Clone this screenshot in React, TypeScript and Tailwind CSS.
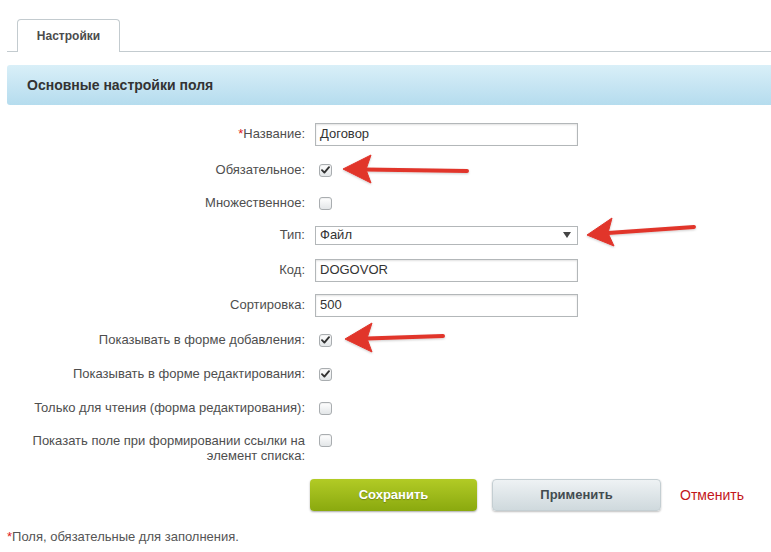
import React from "react";

const font = { fontFamily: '"Liberation Sans", Arial, sans-serif' };

function Check({ checked }: { checked?: boolean }) {
  return (
    <span className="ml-[4px] inline-flex h-[13px] w-[13px] items-center justify-center rounded-[3px] border border-[#a9adb0] bg-gradient-to-b from-[#ffffff] to-[#e3e6e8] shadow-[inset_0_1px_1px_rgba(0,0,0,0.06)]">
      {checked && (
        <svg width="9" height="8" viewBox="0 0 9 8">
          <path d="M1 4.2 L3.4 6.6 L8 1.2" fill="none" stroke="#333" strokeWidth="1.9" strokeLinecap="round" strokeLinejoin="round" />
        </svg>
      )}
    </span>
  );
}

function Input({ value }: { value: string }) {
  return (
    <div className="flex h-[23px] w-[263px] items-center border border-[#b3b7b9] bg-white pl-[4px] text-[13px] text-[#333] shadow-[inset_0_1px_2px_rgba(0,0,0,0.12)]">
      {value}
    </div>
  );
}

function Row({ label, h, children, req }: { label: string; h: string; children: React.ReactNode; req?: boolean }) {
  return (
    <div className={`flex items-center ${h}`}>
      <div className="w-[306px] pr-[1px] text-right text-[13px] text-[#4e4e4e]">
        {req && <span className="text-[#e01b1b]">*</span>}
        {label}
      </div>
      <div className="ml-[9px] flex items-center">{children}</div>
    </div>
  );
}

export default function App() {
  return (
    <div className="relative h-[552px] w-[771px] overflow-hidden bg-white" style={font}>
      {/* tabs */}
      <div className="ml-[7px] flex h-[52px] items-end border-b border-[#c3cbcf] pl-[10px]">
        <div className="relative -mb-px flex h-[33px] w-[103px] items-center justify-center rounded-t-[4px] border border-b-0 border-[#c3cbcf] bg-white text-[12px] font-bold text-[#4c4c4c]">
          Настройки
        </div>
      </div>
      {/* section bar */}
      <div className="ml-[7px] mt-[13px] flex h-[40px] items-center rounded-l-[3px] bg-gradient-to-b from-[#d9eff8] to-[#b5dcee] pl-[20px] text-[14px] font-bold text-[#333]">
        Основные настройки поля
      </div>

      {/* form */}
      <div className="mt-[12px] flex flex-col">
        <Row label="Название:" h="h-[34px]" req>
          <Input value="Договор" />
        </Row>
        <Row label="Обязательное:" h="h-[38px]">
          <Check checked />
        </Row>
        <Row label="Множественное:" h="h-[28px]">
          <Check />
        </Row>
        <Row label="Тип:" h="h-[36px]">
          <div className="flex h-[19px] w-[263px] items-center justify-between border border-[#b3b7b9] bg-white pl-[4px] pr-[6px] text-[13px] text-[#333]">
            <span>Файл</span>
            <svg width="8" height="6" viewBox="0 0 8 6">
              <path d="M0 0 H8 L4 6 Z" fill="#444" />
            </svg>
          </div>
        </Row>
        <Row label="Код:" h="h-[34px]">
          <Input value="DOGOVOR" />
        </Row>
        <Row label="Сортировка:" h="h-[36px]">
          <Input value="500" />
        </Row>
        <Row label="Показывать в форме добавления:" h="h-[34px]">
          <Check checked />
        </Row>
        <Row label="Показывать в форме редактирования:" h="h-[34px]">
          <Check checked />
        </Row>
        <Row label="Только для чтения (форма редактирования):" h="h-[34px]">
          <Check />
        </Row>
        <div className="flex items-start pt-[8px]">
          <div className="w-[306px] pr-[1px] text-right text-[13px] leading-[15px] text-[#4e4e4e]">
            Показать поле при формировании ссылки на
            <br />
            элемент списка:
          </div>
          <div className="ml-[9px] mt-[1px] flex items-center">
            <Check />
          </div>
        </div>

        {/* buttons */}
        <div className="ml-[310px] mt-[16px] flex items-center">
          <button className="h-[32px] w-[167px] rounded-[4px] bg-gradient-to-b from-[#b2cb25] to-[#8aa90e] text-[13px] font-bold text-white shadow-[0_1px_2px_rgba(0,0,0,0.35)] [text-shadow:0_1px_1px_rgba(0,0,0,0.25)]">
            Сохранить
          </button>
          <button className="ml-[15px] h-[32px] w-[169px] rounded-[4px] border border-[#c4ced2] bg-gradient-to-b from-[#eef2f4] to-[#cfd9dd] text-[13px] font-bold text-[#434c50] shadow-[0_1px_2px_rgba(0,0,0,0.25)]">
            Применить
          </button>
          <span className="ml-[19px] text-[14px] text-[#c3161b]">Отменить</span>
        </div>

        <div className="ml-[7px] mt-[16px] text-[13px] text-[#555]">
          <span className="text-[#e01b1b]">*</span>Поля, обязательные для заполнения.
        </div>
      </div>

      {/* annotation arrows */}
      <svg className="pointer-events-none absolute left-0 top-0" width="771" height="552" viewBox="0 0 771 552">
        <defs>
          <filter id="sh" x="-10%" y="-30%" width="120%" height="160%">
            <feDropShadow dx="0" dy="1" stdDeviation="1" floodColor="#000" floodOpacity="0.2" />
          </filter>
        </defs>
        <g fill="#e1352c" stroke="#e1352c" filter="url(#sh)">
          <line x1="365" y1="169.5" x2="467" y2="171" strokeWidth="4" strokeLinecap="round" />
          <path d="M343 169 L371 155 L366 169.5 L371 183 Z" strokeWidth="1" strokeLinejoin="round" />

          <line x1="608" y1="233" x2="694" y2="227" strokeWidth="4" strokeLinecap="round" />
          <path d="M587 235 L612 218 L608 233 L614 246 Z" strokeWidth="1" strokeLinejoin="round" />

          <line x1="367" y1="338.5" x2="443" y2="336" strokeWidth="4" strokeLinecap="round" />
          <path d="M345 339 L372 323 L367 338.5 L372 352 Z" strokeWidth="1" strokeLinejoin="round" />
        </g>
      </svg>
    </div>
  );
}
